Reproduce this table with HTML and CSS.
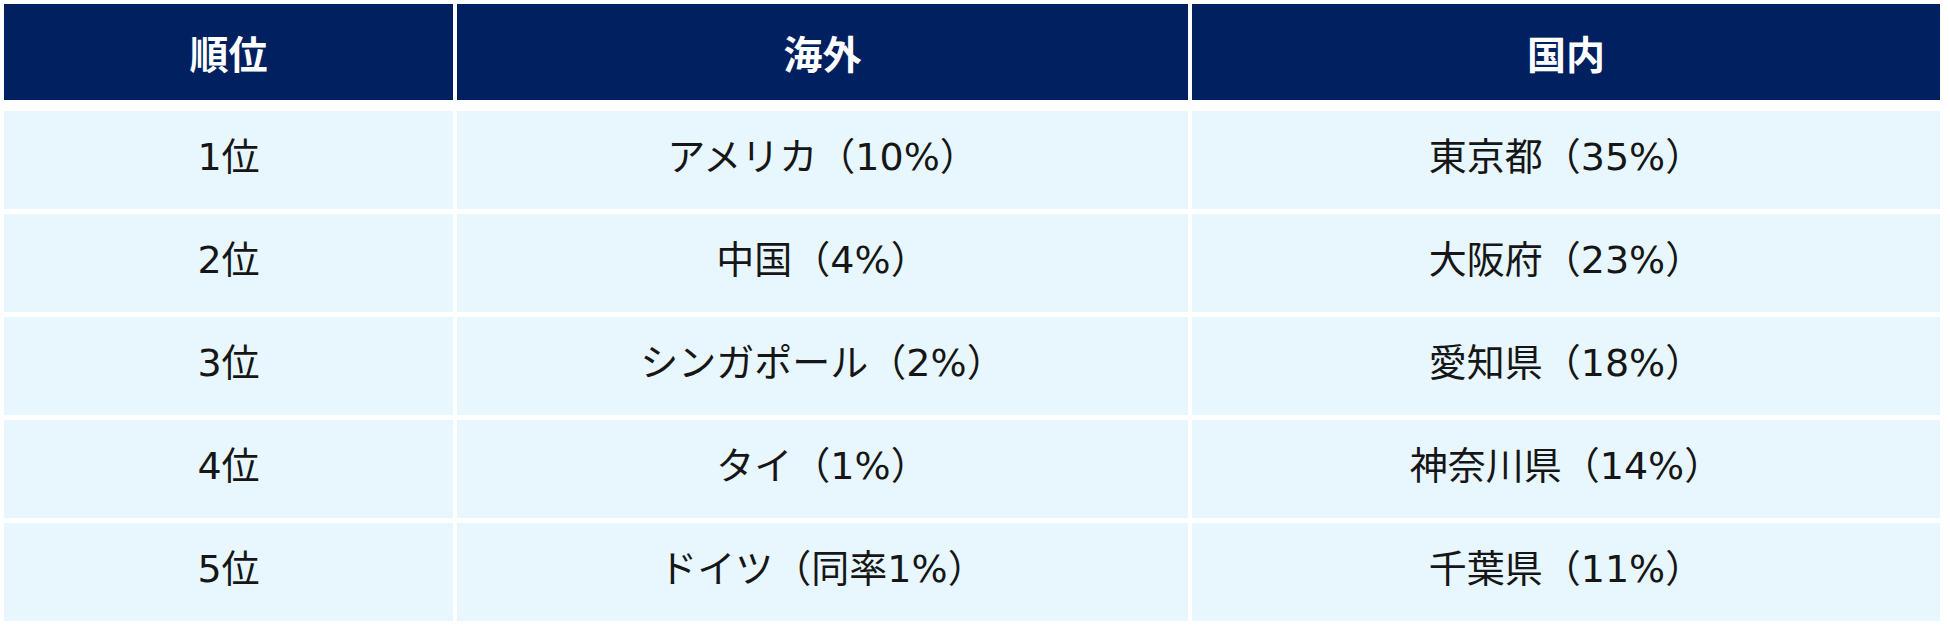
FILE: index.html
```html
<!DOCTYPE html>
<html lang="ja">
<head>
<meta charset="utf-8">
<link rel="stylesheet" href="styles.css">
</head>
<body>
<div class="table">
  <div class="head">
    <div class="hcell">順位</div>
    <div class="hcell">海外</div>
    <div class="hcell">国内</div>
  </div>
  <div class="rows">
    <div class="cell">1位</div><div class="cell">アメリカ（10%）</div><div class="cell">東京都（35%）</div>
    <div class="cell">2位</div><div class="cell">中国（4%）</div><div class="cell">大阪府（23%）</div>
    <div class="cell">3位</div><div class="cell">シンガポール（2%）</div><div class="cell">愛知県（18%）</div>
    <div class="cell">4位</div><div class="cell">タイ（1%）</div><div class="cell">神奈川県（14%）</div>
    <div class="cell">5位</div><div class="cell">ドイツ（同率1%）</div><div class="cell">千葉県（11%）</div>
  </div>
</div>
</body>
</html>
```
FILE: styles.css
```css
html, body {
  margin: 0;
  padding: 0;
  background: #ffffff;
}
body {
  font-family: "DejaVu Sans", "Noto Sans CJK JP", sans-serif;
  color: #161616;
}
.table {
  padding: 4px 10px 0 4px;
  width: 1936px;
}
.head, .rows {
  display: grid;
  grid-template-columns: 449px 731px 748px;
  column-gap: 4px;
}
.rows {
  margin-top: 11px;
  row-gap: 5px;
  grid-auto-rows: 98px;
}
.hcell {
  height: 96px;
  background: #012060;
  color: #ffffff;
  font-family: "Noto Sans CJK JP", sans-serif;
  font-weight: 700;
  font-size: 39px;
  display: flex;
  align-items: center;
  justify-content: center;
}
.cell {
  background: #e8f6fd;
  font-size: 38px;
  line-height: 1;
  padding-bottom: 6px;
  box-sizing: border-box;
  display: flex;
  align-items: center;
  justify-content: center;
}
```
